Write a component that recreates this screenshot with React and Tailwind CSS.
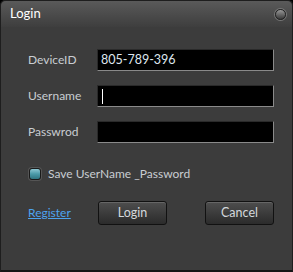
import React from "react";

const Field = ({ label, value, caret }) => (
  <div className="flex items-center h-[22px]">
    <div className="w-[69px] text-[12px] text-[#c9cdd2]">{label}</div>
    <div className="w-[177px] h-[22px] bg-black border-t border-l border-[#2a2a2a] border-r border-b border-r-[#8a8a8a] border-b-[#8a8a8a] flex items-center pl-[3px] text-[12.5px] text-[#dfe6ee]">
      {value}
      {caret && <div className="w-px h-[15px] bg-white ml-[1px]"></div>}
    </div>
  </div>
);

const Button = ({ children }) => (
  <button className="w-[69px] h-[24px] rounded-[3px] border border-[#111] bg-gradient-to-b from-[#4e4e4e] to-[#2b2b2b] shadow-[inset_0_1px_0_#666] text-[12.5px] text-[#d4d8dc]">
    {children}
  </button>
);

export default function App() {
  return (
    <div className="w-[293px] h-[272px] bg-black font-['Lato','Noto_Sans',sans-serif]">
      <div className="h-full rounded-t-[5px] border border-[#1e1e1e] border-b-2 border-b-[#151515] bg-[#3c3c3c] flex flex-col">
        <div className="h-[26px] rounded-t-[5px] bg-gradient-to-b from-[#5a5a5a] to-[#3e3e3e] flex items-center justify-between pl-[9px] pr-[6px]">
          <span className="text-[13px] text-white">Login</span>
          <div className="w-[11px] h-[11px] rounded-full border border-[#222] bg-gradient-to-b from-[#9a9a9a] to-[#3a3a3a] shadow-[0_0_0_1px_#777]"></div>
        </div>
        <div className="pl-[27px] pt-[22px] flex flex-col gap-[14px]">
          <Field label="DeviceID" value="805-789-396" />
          <Field label="Username" caret />
          <Field label="Passwrod" />
        </div>
        <div className="pl-[28px] mt-[22px] flex items-center gap-[7px]">
          <div className="w-[12px] h-[12px] rounded-[3px] border border-[#1a1a1a] bg-gradient-to-b from-[#8cc7d2] via-[#4a9aa8] to-[#2f7480] shadow-[0_0_0_1px_#555]"></div>
          <span className="text-[12px] text-[#c9cdd2]">Save UserName _Password</span>
        </div>
        <div className="pl-[27px] mt-[18px] flex items-center">
          <a className="w-[70px] text-[12px] text-[#4da3ee] underline">Register</a>
          <Button>Login</Button>
          <div className="w-[38px]"></div>
          <Button>Cancel</Button>
        </div>
      </div>
    </div>
  );
}
